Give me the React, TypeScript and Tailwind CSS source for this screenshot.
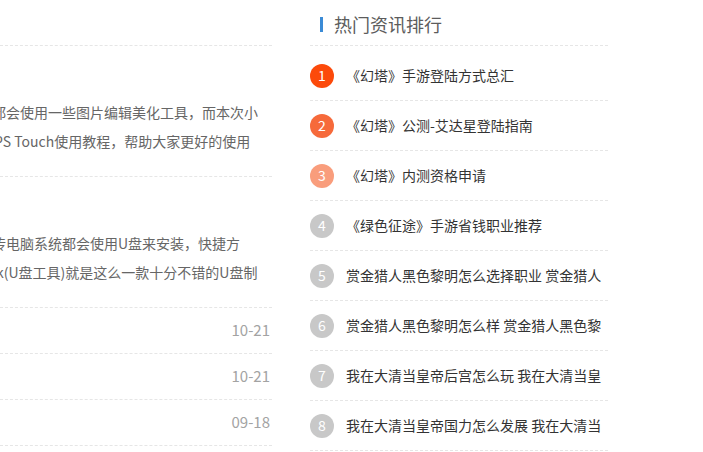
import React from 'react';

// Left column: article summaries cut off at the left edge, then a short list of dated links
const articles = [
  {
    lines: [
      { text: '都会使用一些图片编辑美化工具，而本次小', ml: 'ml-[-8px]' },
      { text: 'PS Touch使用教程，帮助大家更好的使用', ml: 'ml-[-6px]' },
    ],
  },
  {
    lines: [
      { text: '传电脑系统都会使用U盘来安装，快捷方', ml: 'ml-[-8px]' },
      { text: 'k(U盘工具)就是这么一款十分不错的U盘制', ml: 'ml-[-4px]' },
    ],
  },
];

const dates = ['10-21', '10-21', '09-18'];

// Right column: hot news ranking
const ranking = [
  { n: 1, title: '《幻塔》手游登陆方式总汇', color: 'bg-[#fc4a0b]' },
  { n: 2, title: '《幻塔》公测-艾达星登陆指南', color: 'bg-[#f66a3b]' },
  { n: 3, title: '《幻塔》内测资格申请', color: 'bg-[#f99d7c]' },
  { n: 4, title: '《绿色征途》手游省钱职业推荐', color: 'bg-[#c8c8c8]' },
  { n: 5, title: '赏金猎人黑色黎明怎么选择职业 赏金猎人', color: 'bg-[#c8c8c8]' },
  { n: 6, title: '赏金猎人黑色黎明怎么样 赏金猎人黑色黎', color: 'bg-[#c8c8c8]' },
  { n: 7, title: '我在大清当皇帝后宫怎么玩 我在大清当皇', color: 'bg-[#c8c8c8]' },
  { n: 8, title: '我在大清当皇帝国力怎么发展 我在大清当', color: 'bg-[#c8c8c8]' },
];

export default function App() {
  return (
    <div
      className="w-[703px] h-[452px] overflow-hidden bg-white flex"
      style={{ fontFamily: '"Microsoft YaHei", "Noto Sans CJK SC", "Noto Sans", sans-serif' }}
    >
      {/* Left column */}
      <div className="w-[272px] shrink-0 overflow-hidden">
        <div className="h-[46px] border-b border-dashed border-[#e6e6e6]" />
        {articles.map((a, i) => (
          <div key={i} className="h-[131px] pt-[52px] border-b border-dashed border-[#e6e6e6]">
            {a.lines.map((l, j) => (
              <div
                key={j}
                className={`${l.ml} whitespace-nowrap text-[14px] leading-[29px] text-[#666]`}
              >
                {l.text}
              </div>
            ))}
          </div>
        ))}
        {dates.map((d, i) => (
          <div
            key={i}
            className="h-[46px] border-b border-dashed border-[#e6e6e6] flex items-center justify-end pr-[2px] text-[15px] text-[#a3a3a3]"
          >
            {d}
          </div>
        ))}
      </div>

      {/* Right column */}
      <div className="w-[298px] ml-[38px] shrink-0">
        <div className="h-[46px] border-b border-dashed border-[#e6e6e6] flex items-center pl-[10px] pt-[4px]">
          <span className="w-[3px] h-[15px] bg-[#3b8bd6] mr-[11px]" />
          <span className="text-[18px] text-[#5c5c5c]">热门资讯排行</span>
        </div>
        <ul className="pt-[5px]">
          {ranking.map((r) => (
            <li
              key={r.n}
              className="h-[50px] border-b border-dashed border-[#e6e6e6] flex items-center"
            >
              <span
                className={`${r.color} w-[24px] h-[24px] rounded-full shrink-0 flex items-center justify-center text-white text-[14px]`}
              >
                {r.n}
              </span>
              <span className="ml-[12px] w-[258px] overflow-hidden whitespace-nowrap text-[14px] text-[#333]">
                {r.title}
              </span>
            </li>
          ))}
        </ul>
      </div>
    </div>
  );
}
